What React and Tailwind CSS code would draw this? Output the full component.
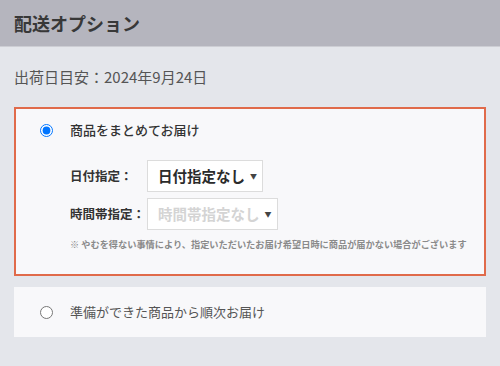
import { useState } from "react";

const font = { fontFamily: '"Noto Sans CJK JP", "Noto Sans", sans-serif' };

function FakeSelect({ value, placeholder, width }) {
  return (
    <div
      className={`flex items-center gap-[5px] h-[32px] pl-[10px] bg-white border border-[#dcdcdc] ${width}`}
    >
      <span
        className={`text-[14.5px] font-bold leading-none whitespace-nowrap ${
          placeholder ? "text-[#d4d4d4]" : "text-[#2b2b2b]"
        }`}
      >
        {value}
      </span>
      <span className="text-[7px] text-[#444] leading-none">▼</span>
    </div>
  );
}

export default function App() {
  const [mode, setMode] = useState("bundle");

  return (
    <div className="w-[500px] h-[366px] bg-[#e4e6eb] overflow-hidden" style={font}>
      {/* Header */}
      <div className="h-[47px] flex items-center px-[14px] bg-[#b5b5be] border-b border-[#cdced4]">
        <h1 className="text-[18px] font-bold text-[#383838]">配送オプション</h1>
      </div>

      <div className="px-[14px]">
        <div className="h-[60px] flex items-center text-[15px] text-[#555]">
          出荷日目安：2024年9月24日
        </div>

        {/* Option 1 */}
        <div className="h-[169px] border-2 border-[#e06a4a] bg-[#f8f8fa] pt-[12px] pl-[24px]">
          <label className="flex items-center h-[18px] gap-[17px] cursor-pointer">
            <input
              type="radio"
              name="ship"
              checked={mode === "bundle"}
              onChange={() => setMode("bundle")}
              className="m-0 w-[13px] h-[13px]"
            />
            <span className="text-[13px] font-medium text-[#333]">商品をまとめてお届け</span>
          </label>

          <div className="pl-[30px] mt-[21px] flex flex-col gap-[6px]">
            <div className="flex items-center">
              <span className="w-[77px] shrink-0 whitespace-nowrap text-[12.5px] font-bold text-[#333]">
                日付指定：
              </span>
              <FakeSelect value="日付指定なし" width="w-[116px]" />
            </div>
            <div className="flex items-center">
              <span className="w-[77px] shrink-0 whitespace-nowrap text-[12.5px] font-bold text-[#333]">
                時間帯指定：
              </span>
              <FakeSelect value="時間帯指定なし" placeholder width="w-[131px]" />
            </div>
          </div>

          <p className="pl-[30px] mt-[8px] text-[9.2px] leading-[12px] font-bold text-[#8a8a8a] whitespace-nowrap">
            ※ やむを得ない事情により、指定いただいたお届け希望日時に商品が届かない場合がございます
          </p>
        </div>

        {/* Option 2 */}
        <div className="mt-[11px] h-[50px] bg-[#f8f8fa] pl-[26px] flex items-center">
          <label className="flex items-center gap-[17px] cursor-pointer">
            <input
              type="radio"
              name="ship"
              checked={mode === "each"}
              onChange={() => setMode("each")}
              className="m-0 w-[13px] h-[13px]"
            />
            <span className="text-[13px] text-[#555]">準備ができた商品から順次お届け</span>
          </label>
        </div>
      </div>
    </div>
  );
}
